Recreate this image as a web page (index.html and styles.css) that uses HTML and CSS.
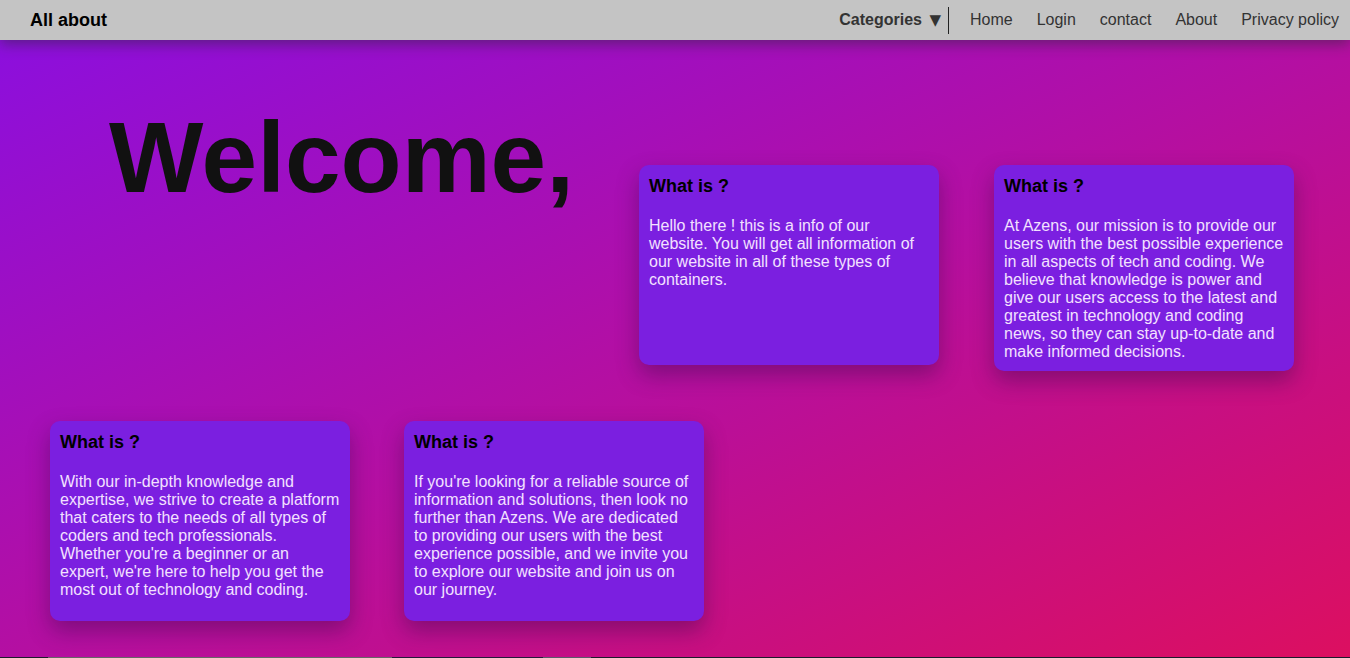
FILE: index.html
```html
<!DOCTYPE html>
<html lang="en">
<head>
<meta charset="utf-8">
<title>All about</title>
<link rel="stylesheet" href="styles.css">
</head>
<body>
<header class="nav">
  <div class="brand">All about</div>
  <nav class="nav-right">
    <span class="cat">Categories <span class="arrow">&#9660;</span></span>
    <span class="divider"></span>
    <ul class="links">
      <li><a href="#">Home</a></li>
      <li><a href="#">Login</a></li>
      <li><a href="#">contact</a></li>
      <li><a href="#">About</a></li>
      <li><a href="#">Privacy policy</a></li>
    </ul>
  </nav>
</header>
<main class="hero">
  <div class="row row-top">
    <h1 class="welcome">Welcome,</h1>
    <div class="cards cards-top">
      <div class="card">
        <h3>What is ?</h3>
        <p>Hello there ! this is a info of our website. You will get all information of our website in all of these types of containers.</p>
      </div>
      <div class="card">
        <h3>What is ?</h3>
        <p>At Azens, our mission is to provide our users with the best possible experience in all aspects of tech and coding. We believe that knowledge is power and give our users access to the latest and greatest in technology and coding news, so they can stay up-to-date and make informed decisions.</p>
      </div>
    </div>
  </div>
  <div class="row row-bottom">
    <div class="card">
      <h3>What is ?</h3>
      <p>With our in-depth knowledge and expertise, we strive to create a platform that caters to the needs of all types of coders and tech professionals. Whether you're a beginner or an expert, we're here to help you get the most out of technology and coding.</p>
    </div>
    <div class="card">
      <h3>What is ?</h3>
      <p>If you're looking for a reliable source of information and solutions, then look no further than Azens. We are dedicated to providing our users with the best experience possible, and we invite you to explore our website and join us on our journey.</p>
    </div>
  </div>
</main>
<footer class="footer">
  <div class="foot-strip">
    <span class="seg seg-a"></span>
    <span class="seg seg-b"></span>
    <span class="seg seg-c"></span>
    <span class="seg seg-d"></span>
  </div>
</footer>
</body>
</html>
```

FILE: styles.css
```css
* { box-sizing: border-box; }

html, body {
  margin: 0;
  padding: 0;
}

body {
  font-family: "Liberation Sans", Arial, sans-serif;
  background: #1c1b2b;
}

.nav {
  position: relative;
  z-index: 2;
  height: 40px;
  background: #c4c4c4;
  display: flex;
  align-items: center;
  justify-content: space-between;
  padding: 0 0 0 30px;
  box-shadow: 0 4px 14px rgba(50, 40, 60, 0.55);
}

.brand {
  font-size: 18px;
  font-weight: bold;
  color: #000;
}

.nav-right {
  display: flex;
  align-items: center;
  height: 100%;
}

.cat {
  font-size: 16px;
  font-weight: bold;
  color: #333;
}

.arrow {
  font-family: "DejaVu Sans", sans-serif;
  font-size: 15px;
  font-weight: normal;
  color: #333;
  margin-left: 3px;
}

.divider {
  width: 1px;
  height: 27px;
  background: #222;
  margin: 0 21px 0 7px;
}

.links {
  list-style: none;
  margin: 0;
  padding: 0 11px 0 0;
  display: flex;
  gap: 24px;
}

.links a {
  font-size: 16px;
  color: #333;
  text-decoration: none;
}

.hero {
  background: linear-gradient(to bottom right, #8c0fdd 0%, #b40fa2 50%, #dc0f60 100%);
  padding-bottom: 36px;
}

.row {
  display: flex;
  align-items: flex-start;
}

.row-top {
  padding-left: 109px;
}

.welcome {
  flex: 0 0 530px;
  margin: 60px 0 0;
  font-size: 100px;
  font-weight: bold;
  color: #111;
  line-height: 115px;
}

.cards {
  display: flex;
  align-items: flex-start;
  gap: 55px;
}

.cards-top {
  margin-top: 125px;
}

.row-bottom {
  margin-top: 50px;
  padding-left: 50px;
  gap: 54px;
}

.card {
  width: 300px;
  min-height: 200px;
  padding: 11px 10px 10px;
  background: #7b1fe0;
  border-radius: 10px;
  box-shadow: 0 10px 22px rgba(60, 10, 80, 0.45);
}

.card h3 {
  margin: 0 0 20px;
  font-size: 18px;
  font-weight: bold;
  color: #000;
}

.card p {
  margin: 0;
  font-size: 16px;
  color: #f3e1ff;
}

.footer {
  height: 40px;
  background: #1c1b2b;
}

.foot-strip {
  display: flex;
  height: 1px;
}

.seg { display: block; height: 1px; }
.seg-a { width: 48px; }
.seg-b { width: 344px; background: #666; }
.seg-c { width: 151px; background: #241a3a; }
.seg-d { width: 48px; background: #5a5a6a; }
```
